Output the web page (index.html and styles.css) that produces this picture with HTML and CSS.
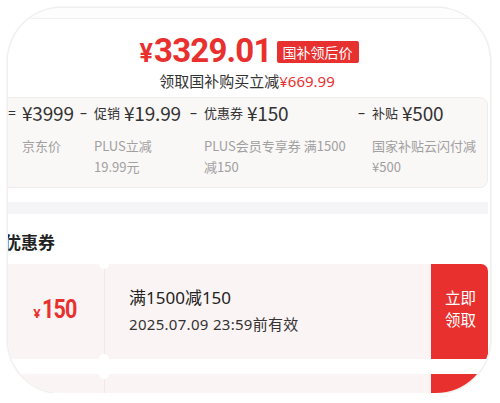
FILE: index.html
```html
<!DOCTYPE html>
<html lang="zh">
<head>
<meta charset="utf-8">
<link rel="stylesheet" href="styles.css">
</head>
<body>
<div class="frame">
  <div class="page">
    <div class="top-strip"></div>
    <section class="price-card">
      <div class="price-line">
        <span class="big-price"><span class="yen">¥</span>3329.01</span>
        <span class="badge">国补领后价</span>
      </div>
      <div class="sub-line">领取国补购买立减<span class="red">¥669.99</span></div>
      <div class="breakdown">
        <div class="col col1">
          <div class="head"><span class="sign">=</span><span class="amt">¥3999</span></div>
          <div class="label">京东价</div>
        </div>
        <div class="col col2">
          <div class="head"><span class="sign">–</span><span class="tag">促销</span><span class="amt">¥19.99</span></div>
          <div class="label">PLUS立减<br>19.99元</div>
        </div>
        <div class="col col3">
          <div class="head"><span class="sign">–</span><span class="tag">优惠券</span><span class="amt">¥150</span></div>
          <div class="label">PLUS会员专享券 满1500<br>减150</div>
        </div>
        <div class="col col4">
          <div class="head"><span class="sign">–</span><span class="tag">补贴</span><span class="amt">¥500</span></div>
          <div class="label">国家补贴云闪付减<br>¥500</div>
        </div>
      </div>
    </section>
    <div class="gap-band"></div>
    <section class="coupon-card">
      <h2 class="title">优惠券</h2>
      <div class="coupon">
        <div class="c-left"><span class="c-yen">¥</span><span class="c-amt">150</span></div>
        <div class="c-mid">
          <div class="c-name">满1500减150</div>
          <div class="c-date">2025.07.09 23:59前有效</div>
        </div>
        <div class="c-btn">立即<br>领取</div>
      </div>
      <div class="coupon">
        <div class="c-left"></div>
        <div class="c-mid"></div>
        <div class="c-btn"></div>
      </div>
    </section>
  </div>
</div>
</body>
</html>
```
FILE: styles.css
```css
* { box-sizing: border-box; }
html, body { margin: 0; padding: 0; background: #fff; }
body {
  font-family: "Noto Sans", "Noto Sans CJK SC", sans-serif;
  color: #333;
}
.frame {
  margin: 8px 0 0 8px;
  width: 482px;
  height: 385px;
  border-radius: 54px;
  overflow: hidden;
  background: #fff;
  box-shadow: 0 0 0 1.5px #efefef, 0 0 4px rgba(0,0,0,0.05);
}
.page {
  margin-left: -14px;
  width: 494px;
}
.top-strip {
  height: 11px;
  background: #fdfdfd;
  border-bottom: 1px solid #f0f0f0;
}
.price-card {
  background: #fff;
  padding-top: 14px;
  padding-bottom: 14px;
}
.price-line {
  display: flex;
  justify-content: center;
  align-items: center;
  height: 38px;
  padding-left: 16px;
}
.big-price {
  font-family: "Roboto", "Noto Sans", sans-serif;
  font-weight: 700;
  font-size: 33px;
  color: #e8312f;
  letter-spacing: -0.8px;
  line-height: 38px;
}
.big-price .yen { font-size: 25px; margin-right: 2px; }
.badge {
  margin-left: 5px;
  background: #e8312f;
  color: #fff;
  font-family: "Noto Sans CJK SC", sans-serif;
  font-size: 14px;
  line-height: 22px;
  padding: 0 6px;
  border-radius: 2px;
}
.sub-line {
  text-align: center;
  font-size: 15px;
  line-height: 20px;
  color: #333;
  padding-left: 12px;
}
.red { color: #e8312f; }
.breakdown {
  margin-top: 6px;
  display: flex;
  background: #faf7f7;
  border: 1px solid #f1ecec;
  border-radius: 8px;
  height: 91px;
  padding: 0 0 0 13px;
}
.col { display: flex; flex-direction: column; }
.col1 { width: 72px; }
.col2 { width: 110px; }
.col3 { width: 168px; }
.col4 { flex: 1; }
.head {
  display: flex;
  align-items: center;
  height: 28px;
  white-space: nowrap;
}
.sign {
  font-size: 14px;
  color: #333;
  width: 14px;
  flex: none;
}
.tag {
  font-family: "Noto Sans CJK SC", sans-serif;
  font-size: 13px;
  color: #333;
  margin-right: 4px;
}
.amt {
  font-size: 19px;
  color: #333;
  font-family: "Noto Sans CJK SC", sans-serif;
  letter-spacing: -0.2px;
}
.label {
  padding-left: 14px;
  font-family: "Noto Sans CJK SC", sans-serif;
  font-size: 13px;
  line-height: 21px;
  color: #a0a0a0;
  margin-top: 9px;
  white-space: nowrap;
}
.gap-band {
  height: 12px;
  background: #f5f5f7;
}
.coupon-card {
  background: #fff;
}
.title {
  margin: 0;
  font-family: "Noto Sans CJK SC", sans-serif;
  font-size: 17px;
  font-weight: 700;
  color: #222;
  line-height: 45px;
  padding: 5px 0 0 10px;
}
.coupon {
  display: flex;
  height: 95px;
  margin-bottom: 15px;
}
.c-left {
  width: 110px;
  background: #fbf4f4;
  display: flex;
  align-items: center;
  justify-content: center;
  padding: 0 0 4px 12px;
  color: #e8312f;
  position: relative;
}
.c-left::after, .c-left::before {
  content: "";
  position: absolute;
  right: -5px;
  width: 10px;
  height: 10px;
  border-radius: 50%;
  background: #fff;
  z-index: 2;
}
.c-left::before { top: -5px; }
.c-left::after { bottom: -5px; }
.c-yen { font-size: 13px; font-weight: 700; margin-top: 7px; margin-right: 1px; }
.c-amt {
  display: inline-block;
  font-family: "Roboto", sans-serif;
  font-size: 25px;
  font-weight: 700;
  letter-spacing: -1px;
  transform: scaleX(0.86);
  transform-origin: left center;
  margin-right: -5px;
}
.c-mid {
  flex: 1;
  background: #fbf4f4;
  border-left: 1px solid #f3e8e8;
  padding: 22px 0 0 24px;
}
.c-name { font-size: 17px; line-height: 24px; color: #222; }
.c-date { font-size: 15px; line-height: 26px; color: #333; margin-top: 1px; letter-spacing: 0.3px; }
.c-btn {
  width: 57px;
  background: #e8312f;
  color: #fff;
  font-family: "Noto Sans CJK SC", sans-serif;
  font-size: 15.5px;
  line-height: 22px;
  display: flex;
  align-items: center;
  justify-content: center;
  text-align: center;
  border-top-right-radius: 7px;
  padding: 0 0 8px 2px;
}
```
